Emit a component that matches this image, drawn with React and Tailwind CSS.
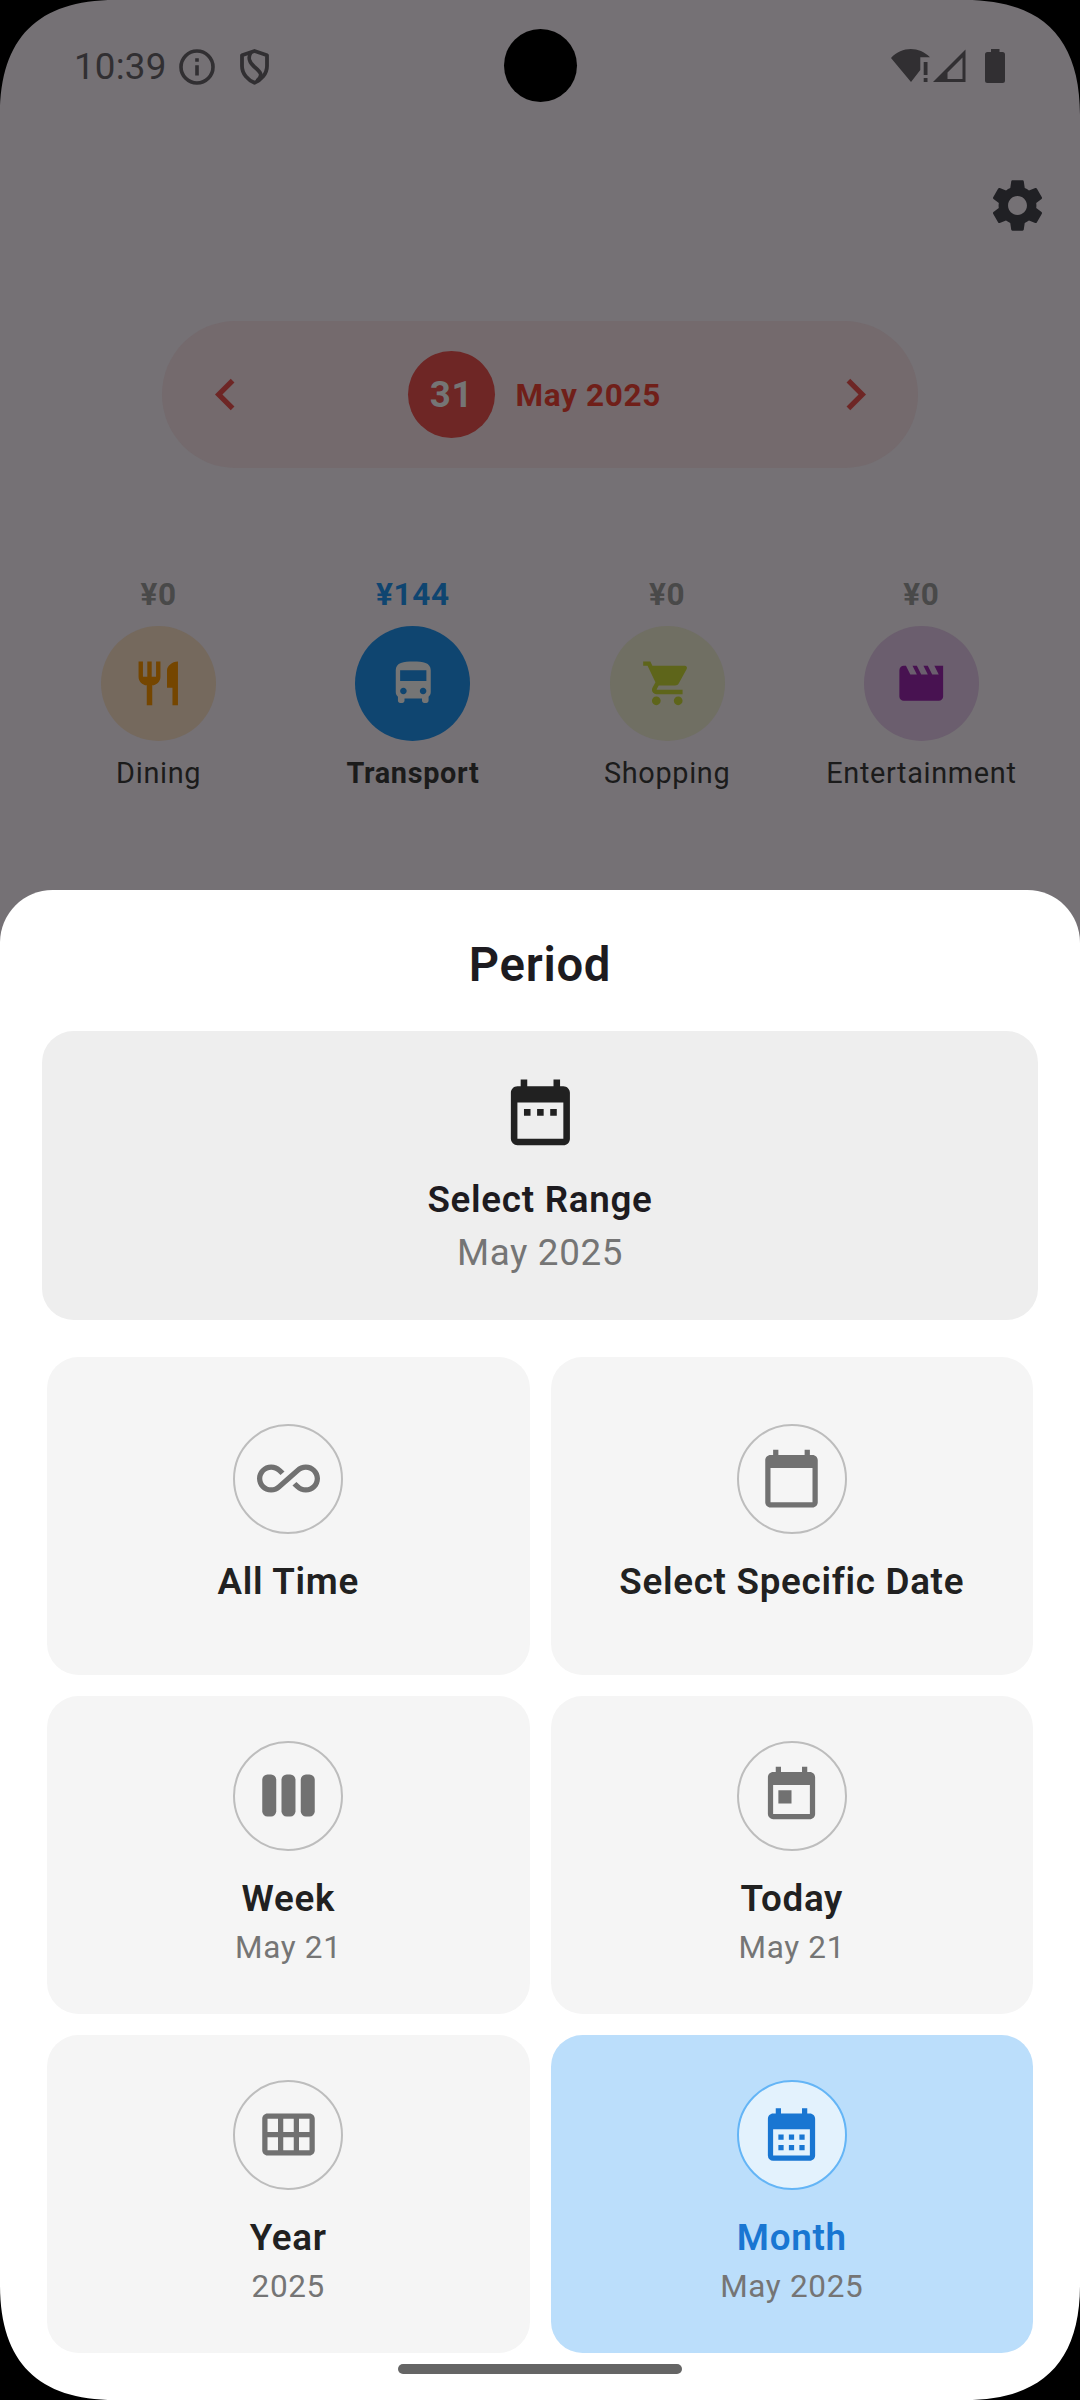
import React from "react";
import {
  MdSettings,
  MdChevronLeft,
  MdChevronRight,
  MdRestaurant,
  MdDirectionsBus,
  MdShoppingCart,
  MdMovie,
  MdDateRange,
  MdAllInclusive,
  MdCalendarToday,
  MdToday,
  MdCalendarViewMonth,
  MdCalendarMonth,
} from "react-icons/md";

function InfoIcon() {
  return (
    <svg width="36" height="36" viewBox="0 0 36 36" fill="none">
      <circle cx="18" cy="18" r="16" stroke="currentColor" strokeWidth="3.6" />
      <path d="M16.2 9.2h3.6v3.6h-3.6zM16.2 16.2h3.6v10.4h-3.6z" fill="currentColor" />
    </svg>
  );
}

function ShieldIcon() {
  return (
    <svg width="29" height="36" viewBox="0 0 29 36" fill="none" stroke="currentColor" strokeWidth="3.8">
      <path d="M14.5 2 27 6.2V17C27 25 21 31 14.5 33.8 8 31 2 25 2 17V6.200Z" strokeLinejoin="round" />
      <path d="M11 3C7.500 9 9 13 14 17.500 21 23.500 23.500 26 17 32" />
    </svg>
  );
}

function WifiAlertIcon() {
  return (
    <svg width="39" height="34" viewBox="0 0 39 34" fill="currentColor">
      <path d="M0 9C11-2.800 28-2.800 39 8.300H29.300V21L20 33Z" />
      <path d="M32.700 13h3.800v13h-3.800zM32.700 29h3.800v4h-3.800z" />
    </svg>
  );
}

function SignalIcon() {
  return (
    <svg width="33" height="34" viewBox="0 0 33 34" fill="currentColor" fillRule="evenodd">
      <path d="M0 33 32.500 0.500V33ZM14.500 30H29.500V8.500L14.500 23.500Z" />
    </svg>
  );
}

function BatteryIcon() {
  return (
    <svg width="20" height="34" viewBox="0 0 20 34" fill="currentColor">
      <path d="M6 0h8.500v3H17.500a2.500 2.500 0 0 1 2.500 2.500V31.500a2.500 2.500 0 0 1-2.500 2.500h-15A2.500 2.500 0 0 1 0 31.500V5.500A2.500 2.500 0 0 1 2.500 3H6Z" />
    </svg>
  );
}

function WeekIcon({ size, className }) {
  return (
    <svg width={size} height={size} viewBox="0 0 24 24" fill="currentColor" className={className}>
      <rect x="2" y="4" width="5.330" height="16" rx="2" />
      <rect x="9.330" y="4" width="5.330" height="16" rx="2" />
      <rect x="16.670" y="4" width="5.330" height="16" rx="2" />
    </svg>
  );
}

function Corner({ className }) {
  return (
    <svg className={"absolute " + className} width="115" height="115" viewBox="0 0 115 115">
      <path d="M0 0H115C38 0 0 38 0 115Z" fill="#000" />
    </svg>
  );
}

const categories = [
  { label: "Dining", amount: "¥0", Icon: MdRestaurant, amountClass: "text-[#494949]", labelClass: "font-normal", circle: "bg-[#75695d]", icon: "text-[#754600]" },
  { label: "Transport", amount: "¥144", Icon: MdDirectionsBus, amountClass: "text-[#0f4570]", labelClass: "font-bold", circle: "bg-[#0f4570]", icon: "text-[#757575]" },
  { label: "Shopping", amount: "¥0", Icon: MdShoppingCart, amountClass: "text-[#494949]", labelClass: "font-normal", circle: "bg-[#706f63]", icon: "text-[#5e651a]" },
  { label: "Entertainment", amount: "¥0", Icon: MdMovie, amountClass: "text-[#494949]", labelClass: "font-normal", circle: "bg-[#6b5e6e]", icon: "text-[#481251]" },
];

const periods = [
  { title: "All Time", Icon: MdAllInclusive },
  { title: "Select Specific Date", Icon: MdCalendarToday },
  { title: "Week", sub: "May 21", Icon: WeekIcon },
  { title: "Today", sub: "May 21", Icon: MdToday },
  { title: "Year", sub: "2025", Icon: MdCalendarViewMonth },
  { title: "Month", sub: "May 2025", Icon: MdCalendarMonth, selected: true },
];

function StatusBar() {
  return (
    <div className="flex h-[131px] items-start pt-[45px] pl-[74px] pr-[75px] text-[#312f32]">
      <span className="w-[105px] text-[36.750px] leading-[43px] tracking-[0.200px]">10:39</span>
      <div className="mt-[4px] flex">
        <InfoIcon />
        <div className="ml-[25px]">
          <ShieldIcon />
        </div>
      </div>
      <div className="ml-auto mt-[4px] flex">
        <WifiAlertIcon />
        <div className="ml-[3px]">
          <SignalIcon />
        </div>
        <div className="ml-[19px]">
          <BatteryIcon />
        </div>
      </div>
    </div>
  );
}

function Category({ label, amount, Icon, amountClass, labelClass, circle, icon }) {
  return (
    <div className="flex flex-col items-center">
      <span className={"text-[31.500px] font-bold leading-[42px] tracking-[0.660px] " + amountClass}>{amount}</span>
      <div className={"mt-[10px] flex size-[115px] items-center justify-center rounded-full " + circle}>
        <Icon size={52.5} className={icon} />
      </div>
      <span className={"mt-[12px] whitespace-nowrap text-[28.875px] leading-[40px] tracking-[0.660px] text-[#1b1b1b] " + labelClass}>{label}</span>
    </div>
  );
}

function PeriodCard({ title, sub, Icon, selected }) {
  return (
    <div className={"flex h-[318px] flex-col items-center justify-center rounded-[31.500px] " + (selected ? "bg-[#bbdefb]" : "bg-[#f5f5f5]")}>
      <div
        className={
          "flex size-[110px] items-center justify-center rounded-full border-[2.625px] " +
          (selected ? "border-[#64b5f6] bg-[#e3f2fd] text-[#1976d2]" : "border-[#bdbdbd] text-[#717171]")
        }
      >
        <Icon size={63} className="mb-px" />
      </div>
      <span className={"mt-[22px] text-[36.750px] font-semibold leading-[52px] tracking-[0.720px] " + (selected ? "text-[#1976d2]" : "text-[#212121]")}>
        {title}
      </span>
      {sub && <span className="mt-[2px] text-[31.500px] leading-[42px] tracking-[0.660px] text-[#757575]">{sub}</span>}
    </div>
  );
}

export default function App() {
  return (
    <div className="relative flex h-[2400px] w-[1080px] flex-col overflow-hidden bg-[#757175] font-[Roboto,sans-serif]">
      <StatusBar />
      <div className="flex h-[150px] justify-end pr-[31.500px]">
        <MdSettings size={63} className="mt-[43px] text-[#202024]" />
      </div>

      <div className="mx-[162px] mt-[40px] flex h-[147px] items-center rounded-full bg-[#746a6d] px-[31.500px] text-[#6e2625]">
        <MdChevronLeft size={63} />
        <div className="ml-[151px] flex size-[87px] items-center justify-center rounded-full bg-[#6e2625] pt-[2px] pl-px text-[36.750px] font-bold leading-none tracking-[0.660px] text-[#757575]">31</div>
        <span className="ml-[21px] pt-[2px] text-[31.500px] font-bold leading-[42px] tracking-[0.660px] text-[#701f19]">May 2025</span>
        <MdChevronRight size={63} className="ml-auto" />
      </div>

      <div className="mt-[106px] grid grid-cols-4 px-[31.500px]">
        {categories.map((c) => (
          <Category key={c.label} {...c} />
        ))}
      </div>

      <div className="mt-auto flex h-[1510px] flex-none flex-col rounded-t-[52.500px] bg-white pt-[42px]">
        <h1 className="text-center text-[47.250px] font-semibold leading-[67px] tracking-[0.720px] text-[#1d1b20]">Period</h1>
        <div className="mx-[42px] mt-[32px] flex h-[289px] flex-col items-center rounded-[31.500px] bg-[#eeeeee] pt-[42px]">
          <MdDateRange size={78.75} className="text-[#212121]" />
          <span className="mt-[22px] text-[36.750px] font-semibold leading-[52.500px] tracking-[0.720px] text-[#1d1b20]">Select Range</span>
          <span className="mt-px text-[36.750px] leading-[52.500px] tracking-[0.660px] text-[#757575]">May 2025</span>
        </div>
        <div className="mx-[47px] mt-[37px] grid grid-cols-2 gap-[21px]">
          {periods.map((p) => (
            <PeriodCard key={p.title} {...p} />
          ))}
        </div>
        <div className="mx-auto mt-[11px] h-[10px] w-[284px] rounded-full bg-[#656565]" />
      </div>

      <div className="absolute left-[503.500px] top-[29px] size-[73px] rounded-full bg-black" />
      <Corner className="left-0 top-0" />
      <Corner className="right-0 top-0 rotate-90" />
      <Corner className="bottom-0 right-0 rotate-180" />
      <Corner className="bottom-0 left-0 -rotate-90" />
    </div>
  );
}
